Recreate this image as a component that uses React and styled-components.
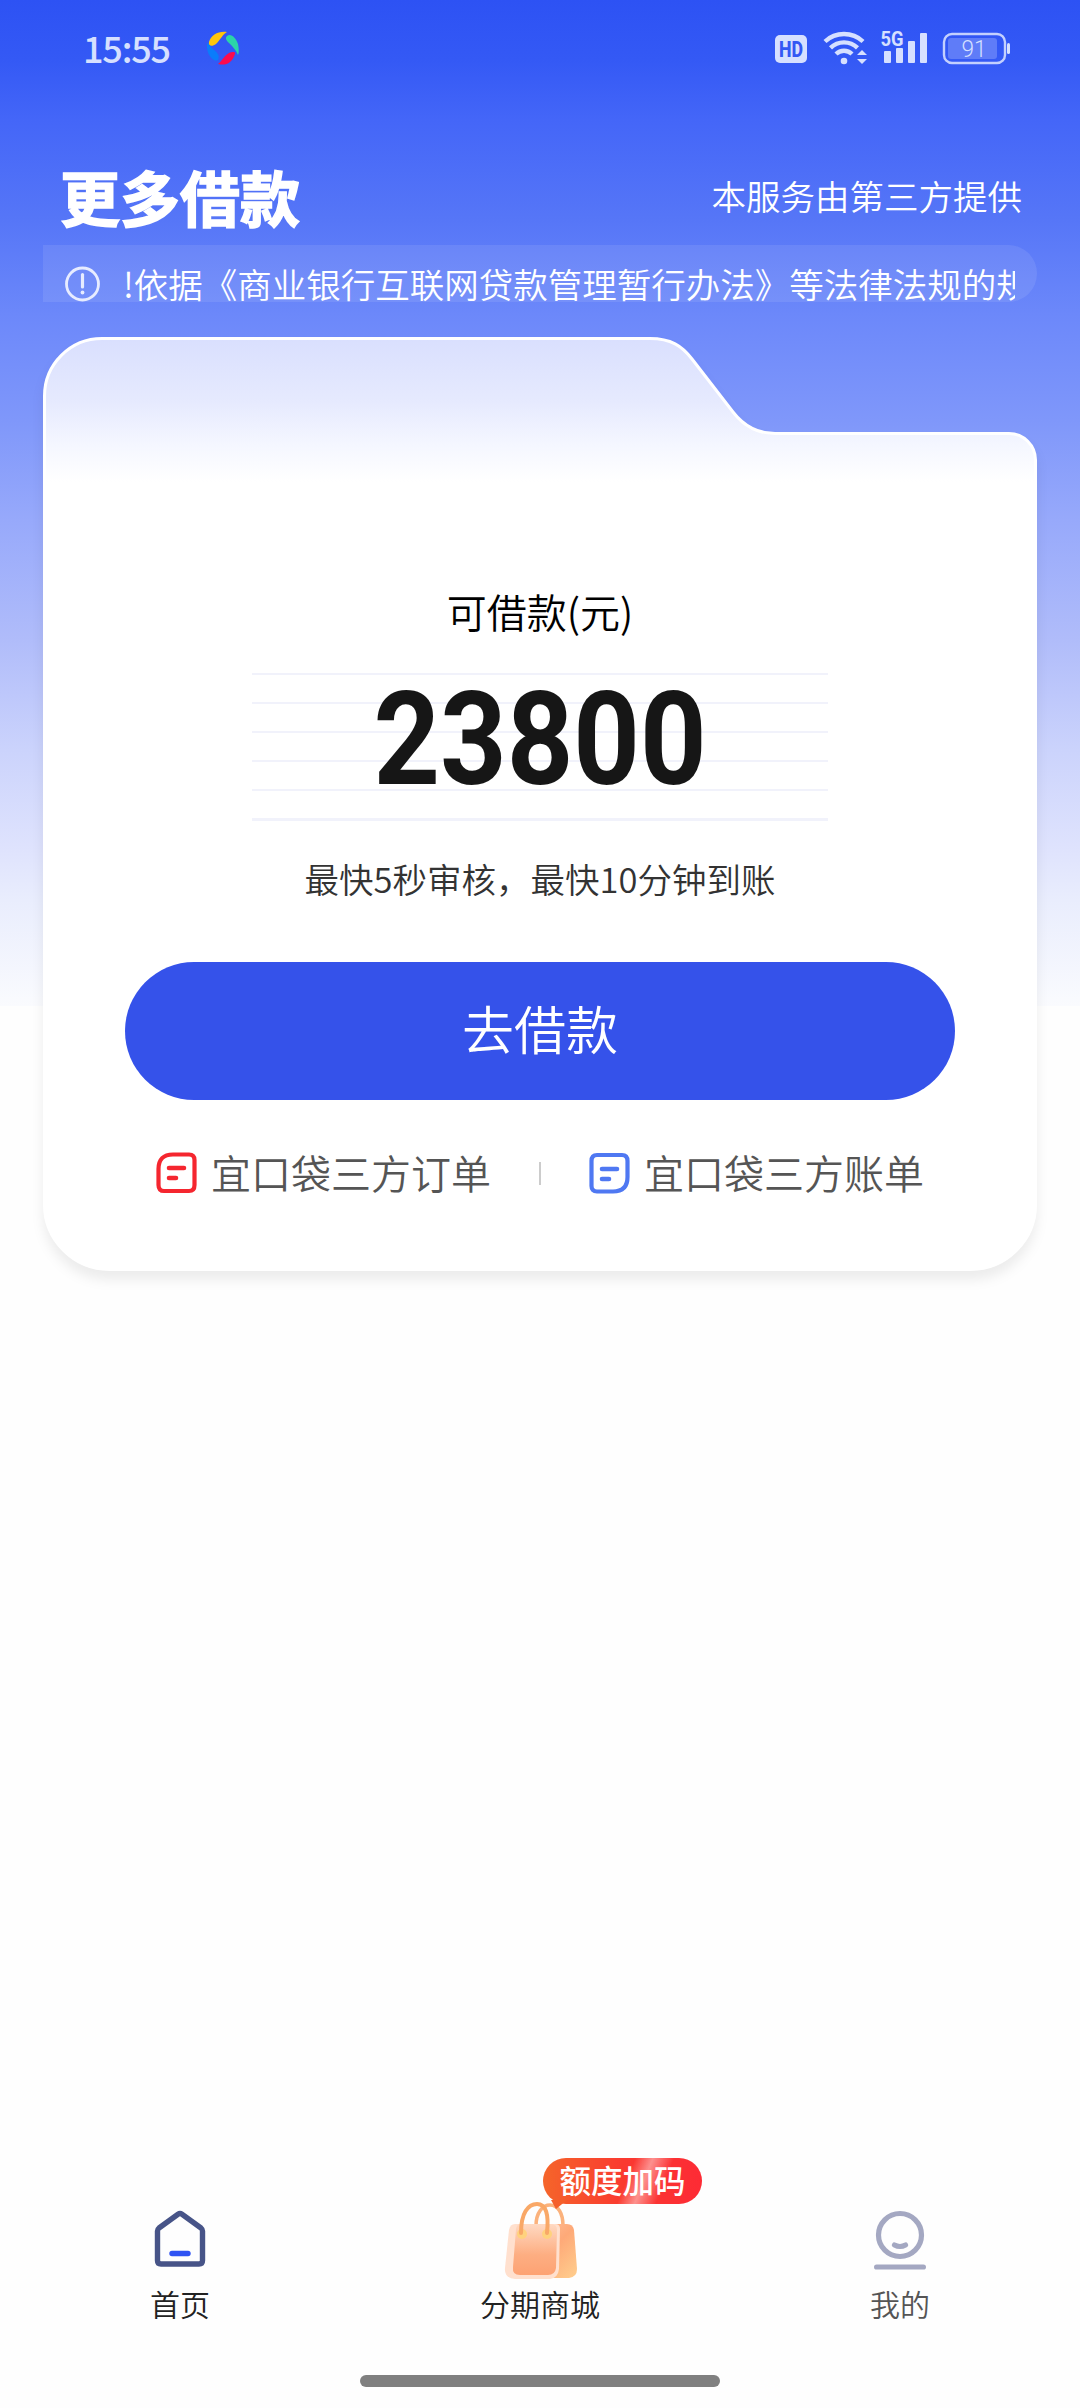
import React from 'react'
import styled, { createGlobalStyle } from 'styled-components'

const GlobalStyle = createGlobalStyle`
  * {
    box-sizing: border-box;
  }

  body {
    margin: 0;
    background-color: #fefefe;
    font-family: 'Noto Sans CJK SC', 'Noto Sans', sans-serif;
    font-weight: 350;
  }
`

const Screen = styled.div`
  display: flex;
  flex-direction: column;
  width: 1080px;
  height: 2408px;
  background: linear-gradient(
    180deg,
    #2d52f4 0,
    #3459f5 60px,
    #4466f8 120px,
    #5676f7 220px,
    #6c88fa 315px,
    #7f97fa 420px,
    #97a9fb 520px,
    #b0bcfa 640px,
    #cbd3fc 750px,
    #dfe3fd 850px,
    #e9edfd 900px,
    #fafbfe 1006px,
    #fefefe 1006px
  ) no-repeat;
  overflow: hidden;
`

const StatusBar = styled.div`
  display: flex;
  justify-content: space-between;
  align-items: center;
  height: 96px;
  padding: 0 70px 0 83px;
`

const StatusGroup = styled.div`
  display: flex;
  align-items: center;
`

const Clock = styled.span`
  width: 123px;
  margin-top: -3px;
  font: 500 36px/44px 'Noto Sans CJK SC', sans-serif;
  letter-spacing: -1.2px;
  color: #d6e0ff;
`

const Header = styled.header`
  display: flex;
  justify-content: space-between;
  align-items: center;
  height: 149px;
  padding: 49px 58px 0 60px;
  color: #fff;
`

const Title = styled.h1`
  margin: 2px 0 0;
  font-size: 60px;
  line-height: 90px;
  font-weight: 700;
  -webkit-text-stroke: 1.5px #fff;
  stroke-linejoin: round;
`

const Provider = styled.span`
  font-size: 34.5px;
  line-height: 52px;
`

const Notice = styled.div`
  display: flex;
  align-items: flex-start;
  height: 57px;
  margin: 0 43px 35px;
  padding: 21px 22px 0;
  border-radius: 0 29px 29px 0;
  background-color: rgba(255, 255, 255, 0.09);
`

const NoticeText = styled.div`
  flex: 1;
  margin: -9px 0 0 23px;
  font-size: 34.5px;
  line-height: 52px;
  color: #fff;
  white-space: nowrap;
  overflow: hidden;
`

const Card = styled.section`
  position: relative;
  display: flex;
  flex-direction: column;
  align-items: center;
  width: 994px;
  height: 934px;
  margin: 0 43px;
  padding-top: 244px;
`

const CardShape = styled.svg`
  position: absolute;
  top: 0;
  left: 0;
  z-index: 0;
  overflow: visible;
  filter: drop-shadow(0 9px 6px rgba(0, 0, 0, 0.07));
`

const AmountLabel = styled.div`
  z-index: 1;
  font-size: 40px;
  line-height: 60px;
  color: #000;
`

const AmountRules = styled.div`
  z-index: 1;
  display: flex;
  justify-content: center;
  width: 576px;
  height: 148px;
  margin-top: 32px;
  background: repeating-linear-gradient(180deg, #f1f2fb 0, #f1f2fb 2px, transparent 2px, transparent 29.1px);
`

const Amount = styled.strong`
  font: 700 129px/133px Roboto, sans-serif;
  color: #161616;
  transform: scaleX(0.9);
`

const Tip = styled.p`
  z-index: 1;
  margin: 31px 0 0;
  font-size: 34.5px;
  line-height: 52px;
  color: #333;
`

const BorrowButton = styled.button`
  z-index: 1;
  flex: none;
  width: 830px;
  height: 138px;
  margin-top: 58px;
  padding: 0 0 6px;
  border: none;
  border-radius: 69px;
  background-color: #3552ea;
  font: 350 52px/76px 'Noto Sans CJK SC', sans-serif;
  color: #fff;
`

const Links = styled.div`
  z-index: 1;
  display: flex;
  justify-content: center;
  align-items: center;
  width: 100%;
  height: 60px;
  margin-top: 43px;
`

const LinkItem = styled.a`
  display: flex;
  align-items: center;
  gap: 14px;
  font-size: 40px;
  line-height: 60px;
  color: #555;

  span {
    margin-top: -3px;
  }
`

const Divider = styled.i`
  width: 2px;
  height: 23px;
  margin: 0 48px;
  background-color: #ccc;
`

const TabBar = styled.nav`
  display: grid;
  grid-template-columns: repeat(3, 1fr);
  margin-top: auto;
  padding-bottom: 50px;
`

const Tab = styled.div`
  position: relative;
  display: flex;
  flex-direction: column;
  align-items: center;
  justify-content: flex-end;
  height: 136px;
  font-size: 30px;
  line-height: 44px;
  color: ${props => props.$muted ? '#555' : '#222'};

  svg {
    display: block;
  }
`

const TabLabel = styled.span`
  margin-top: ${props => props.$gap}px;
`

const Badge = styled.div`
  position: absolute;
  left: 183px;
  top: -31px;
  width: 159px;
  height: 46px;
  border-radius: 23px;
  background:
    linear-gradient(112deg, transparent 52%, rgba(255, 255, 255, 0.45) 62%, transparent 74%),
    linear-gradient(90deg, #f5652a 0%, #fa3a30 50%, #fd2b35 100%);
  font-size: 31.5px;
  line-height: 42px;
  font-weight: 500;
  text-align: center;
  color: #fff;
  white-space: nowrap;

  &::after {
    content: '';
    position: absolute;
    left: 8px;
    bottom: -5px;
    border-style: solid;
    border-width: 9px 11px 0 5px;
    border-color: #f5602b transparent transparent;
  }
`

const HomeIndicator = styled.div`
  flex: none;
  width: 360px;
  height: 12px;
  margin: 0 auto 21px;
  border-radius: 6px;
  background-color: #808080;
`

function AppLogo () {
  return (
    <svg width='34' height='34' viewBox='0 0 34 34'>
      <path d='M3 11C5 4 12 0 21 1C17 3 15 8 10 13C6 16 2 15 3 11Z' fill='#ffc60a' />
      <path d='M21 5C25 2 30 7 32 13C33 18 33 22 32 24C30 19 27 16 23 12C20 9 19 7 21 5Z' fill='#2bd4a8' />
      <path d='M29 23C26 32 20 35 12 33C16 30 18 25 23 22C27 20 30 21 29 23Z' fill='#fb0b4e' />
      <path d='M1 13C1 10 3 14 7 18C12 22 14 25 12 29C8 32 0 24 1 13Z' fill='#0a7cfb' />
    </svg>
  )
}

// HD, wifi, signal and battery in one strip
function StatusIcons () {
  return (
    <svg width='235' height='44' viewBox='0 -4 235 44' fill='#d6e0ff' fontFamily='Roboto, sans-serif'>
      <rect x='0' y='5' width='32' height='28' rx='5' />
      <text x='16' y='27' fontSize='22' fontWeight='800' textAnchor='middle' textLength='24' lengthAdjust='spacingAndGlyphs' fill='#3458f4'>HD</text>
      <g fill='none' stroke='#d6e0ff' strokeWidth='4.4'>
        <path d='M50 11.5A28 28 0 0 1 88 11.5' />
        <path d='M55.5 17.8A19.5 19.5 0 0 1 82.5 17.8' />
        <path d='M61 24A11.5 11.5 0 0 1 77 24' />
      </g>
      <circle cx='69' cy='31' r='3.3' />
      <path d='M82 25L87 20L92 25Z' />
      <path d='M82 29L87 34L92 29Z' />
      <text x='105.5' y='16' fontSize='20' fontWeight='700' textLength='23' lengthAdjust='spacingAndGlyphs'>5G</text>
      <rect x='109' y='21' width='7' height='12' rx='1' />
      <rect x='121' y='18' width='7' height='15' rx='1' />
      <rect x='133' y='11' width='7' height='22' rx='1' />
      <rect x='145' y='3' width='7' height='30' rx='1' />
      <rect x='169' y='4' width='61' height='29' rx='8' fill='none' stroke='#c3d0fe' strokeWidth='2.4' />
      <rect x='173' y='8' width='49' height='21' rx='3' fill='#5f7cf8' />
      <rect x='232' y='13' width='3' height='11' rx='1.5' />
      <text x='199' y='27' fontSize='24' textAnchor='middle' textLength='25' lengthAdjust='spacingAndGlyphs'>91</text>
    </svg>
  )
}

function NoticeIcon () {
  return (
    <svg width='35' height='36' viewBox='0 0 35 36' stroke='#e7ecff' strokeWidth='2.8' fill='none'>
      <circle cx='17.5' cy='18' r='16' />
      <path d='M17.5 8.5V21' strokeWidth='3.2' strokeLinecap='round' />
      <circle cx='17.5' cy='26.5' r='1.9' fill='#e7ecff' stroke='none' />
    </svg>
  )
}

function FolderShape () {
  return (
    <CardShape width='994' height='934' viewBox='0 0 994 934'>
      <defs>
        <linearGradient id='folder' gradientUnits='userSpaceOnUse' x1='0' y1='0' x2='0' y2='145'>
          <stop offset='0' stopColor='#d9dffe' />
          <stop offset='0.45' stopColor='#e6eafe' />
          <stop offset='0.75' stopColor='#f5f7ff' />
          <stop offset='1' stopColor='#fff' />
        </linearGradient>
      </defs>
      <path
        d='M1.5 59A57.500 57.500 0 0 1 59 1.500H607C628 1.500 639 9 649 22L690 75C700 88 713 96.500 732 96.500H966A26.500 26.500 0 0 1 992.500 123V867A65 65 0 0 1 927.500 932.500H66.500A65 65 0 0 1 1.500 867Z'
        fill='url(#folder)'
        stroke='#fff'
        strokeWidth='3'
      />
    </CardShape>
  )
}

function OrderIcon () {
  return (
    <svg width='41' height='42' viewBox='0 0 41 42' fill='none' stroke='#f5262f' strokeWidth='4.2' strokeLinecap='round'>
      <path d='M17 2.500H33Q38.500 2.500 38.500 8V33Q38.500 39 33 39H8Q2.500 39 2.500 33V17Q2.500 2.500 17 2.500Z' />
      <path d='M13 16H28M13 26H20' strokeWidth='4.6' />
    </svg>
  )
}

function BillIcon () {
  return (
    <svg width='41' height='42' viewBox='0 0 41 42' fill='none' stroke='#4f78f2' strokeWidth='4.2' strokeLinecap='round'>
      <path d='M8 3H33Q38.500 3 38.500 9V25Q38.500 39.500 24 39.500H8Q2.500 39.500 2.500 34V9Q2.500 3 8 3Z' />
      <path d='M13 17H28M13 27H20' strokeWidth='4.6' />
    </svg>
  )
}

function HomeIcon () {
  return (
    <svg width='52' height='58' viewBox='0 0 52 58' fill='none' strokeWidth='5.4' strokeLinecap='round' strokeLinejoin='round'>
      <path d='M24 4.200Q26 2.800 28 4.200L47 18Q48.500 19.200 48.500 21V50.500Q48.500 54 45 54H7Q3.500 54 3.500 50.500V21Q3.500 19.200 5 18Z' stroke='#475488' />
      <path d='M18 43.500H34' stroke='#2f53f3' />
    </svg>
  )
}

function BagIcon () {
  return (
    <svg width='74' height='80' viewBox='0 0 74 80' fill='none'>
      <defs>
        <linearGradient id='bagBack' x1='0' y1='0' x2='1' y2='1'>
          <stop offset='0' stopColor='#ffc9a6' />
          <stop offset='0.5' stopColor='#fea978' />
          <stop offset='1' stopColor='#ffcf8e' />
        </linearGradient>
        <linearGradient id='bagFront' x1='0' y1='0' x2='0' y2='1'>
          <stop offset='0' stopColor='#ffd9c2' />
          <stop offset='0.6' stopColor='#fdae82' />
          <stop offset='1' stopColor='#fda273' />
        </linearGradient>
      </defs>
      <path d='M33 25C33 11 40 4 47 4C55 4 60 12 60 25' stroke='#fbb27c' strokeWidth='3.6' />
      <path d='M20 23H64Q70 23 71 29L74 68Q74 76 66 77H20Z' fill='url(#bagBack)' />
      <path d='M12 23H52Q57 23 57 28L56 68Q55 77 47 78H12Q1 77 2 67L6 29Q7 23 12 23Z' fill='#ffe0ce' />
      <path d='M17 23H48Q54 23 54 29L53 67Q52 74 45 74H17Q9 74 10 66L13 28Q14 23 17 23Z' fill='url(#bagFront)' />
      <circle cx='19' cy='33' r='5' fill='#ffd27d' />
      <circle cx='44' cy='33' r='5' fill='#ffd27d' />
      <path d='M18 32C18 12 25 3 34 3C43 3 46 13 44 32' stroke='#f9a867' strokeWidth='4' strokeLinecap='round' />
    </svg>
  )
}

function MineIcon () {
  return (
    <svg width='52' height='60' viewBox='0 0 52 60' fill='none' stroke='#a4a8c2' strokeWidth='5.2' strokeLinecap='round'>
      <circle cx='26' cy='25' r='21.500' />
      <path d='M20.500 35Q26 38 31.500 35' />
      <path d='M2.600 57H49.400' />
    </svg>
  )
}

export default function App () {
  return (
    <>
      <GlobalStyle />
      <Screen>
        <StatusBar>
          <StatusGroup>
            <Clock>15:55</Clock>
            <AppLogo />
          </StatusGroup>
          <StatusIcons />
        </StatusBar>

        <Header>
          <Title>更多借款</Title>
          <Provider>本服务由第三方提供</Provider>
        </Header>

        <Notice>
          <NoticeIcon />
          <NoticeText>!依据《商业银行互联网贷款管理暂行办法》等法律法规的规定</NoticeText>
        </Notice>

        <Card>
          <FolderShape />
          <AmountLabel>可借款(元)</AmountLabel>
          <AmountRules>
            <Amount>23800</Amount>
          </AmountRules>
          <Tip>最快5秒审核，最快10分钟到账</Tip>
          <BorrowButton>去借款</BorrowButton>
          <Links>
            <LinkItem>
              <OrderIcon />
              <span>宜口袋三方订单</span>
            </LinkItem>
            <Divider />
            <LinkItem>
              <BillIcon />
              <span>宜口袋三方账单</span>
            </LinkItem>
          </Links>
        </Card>

        <TabBar>
          <Tab>
            <HomeIcon />
            <TabLabel $gap={13}>首页</TabLabel>
          </Tab>
          <Tab>
            <BagIcon />
            <TabLabel $gap={0}>分期商城</TabLabel>
            <Badge>额度加码</Badge>
          </Tab>
          <Tab $muted>
            <MineIcon />
            <TabLabel $gap={11}>我的</TabLabel>
          </Tab>
        </TabBar>
        <HomeIndicator />
      </Screen>
    </>
  )
}
